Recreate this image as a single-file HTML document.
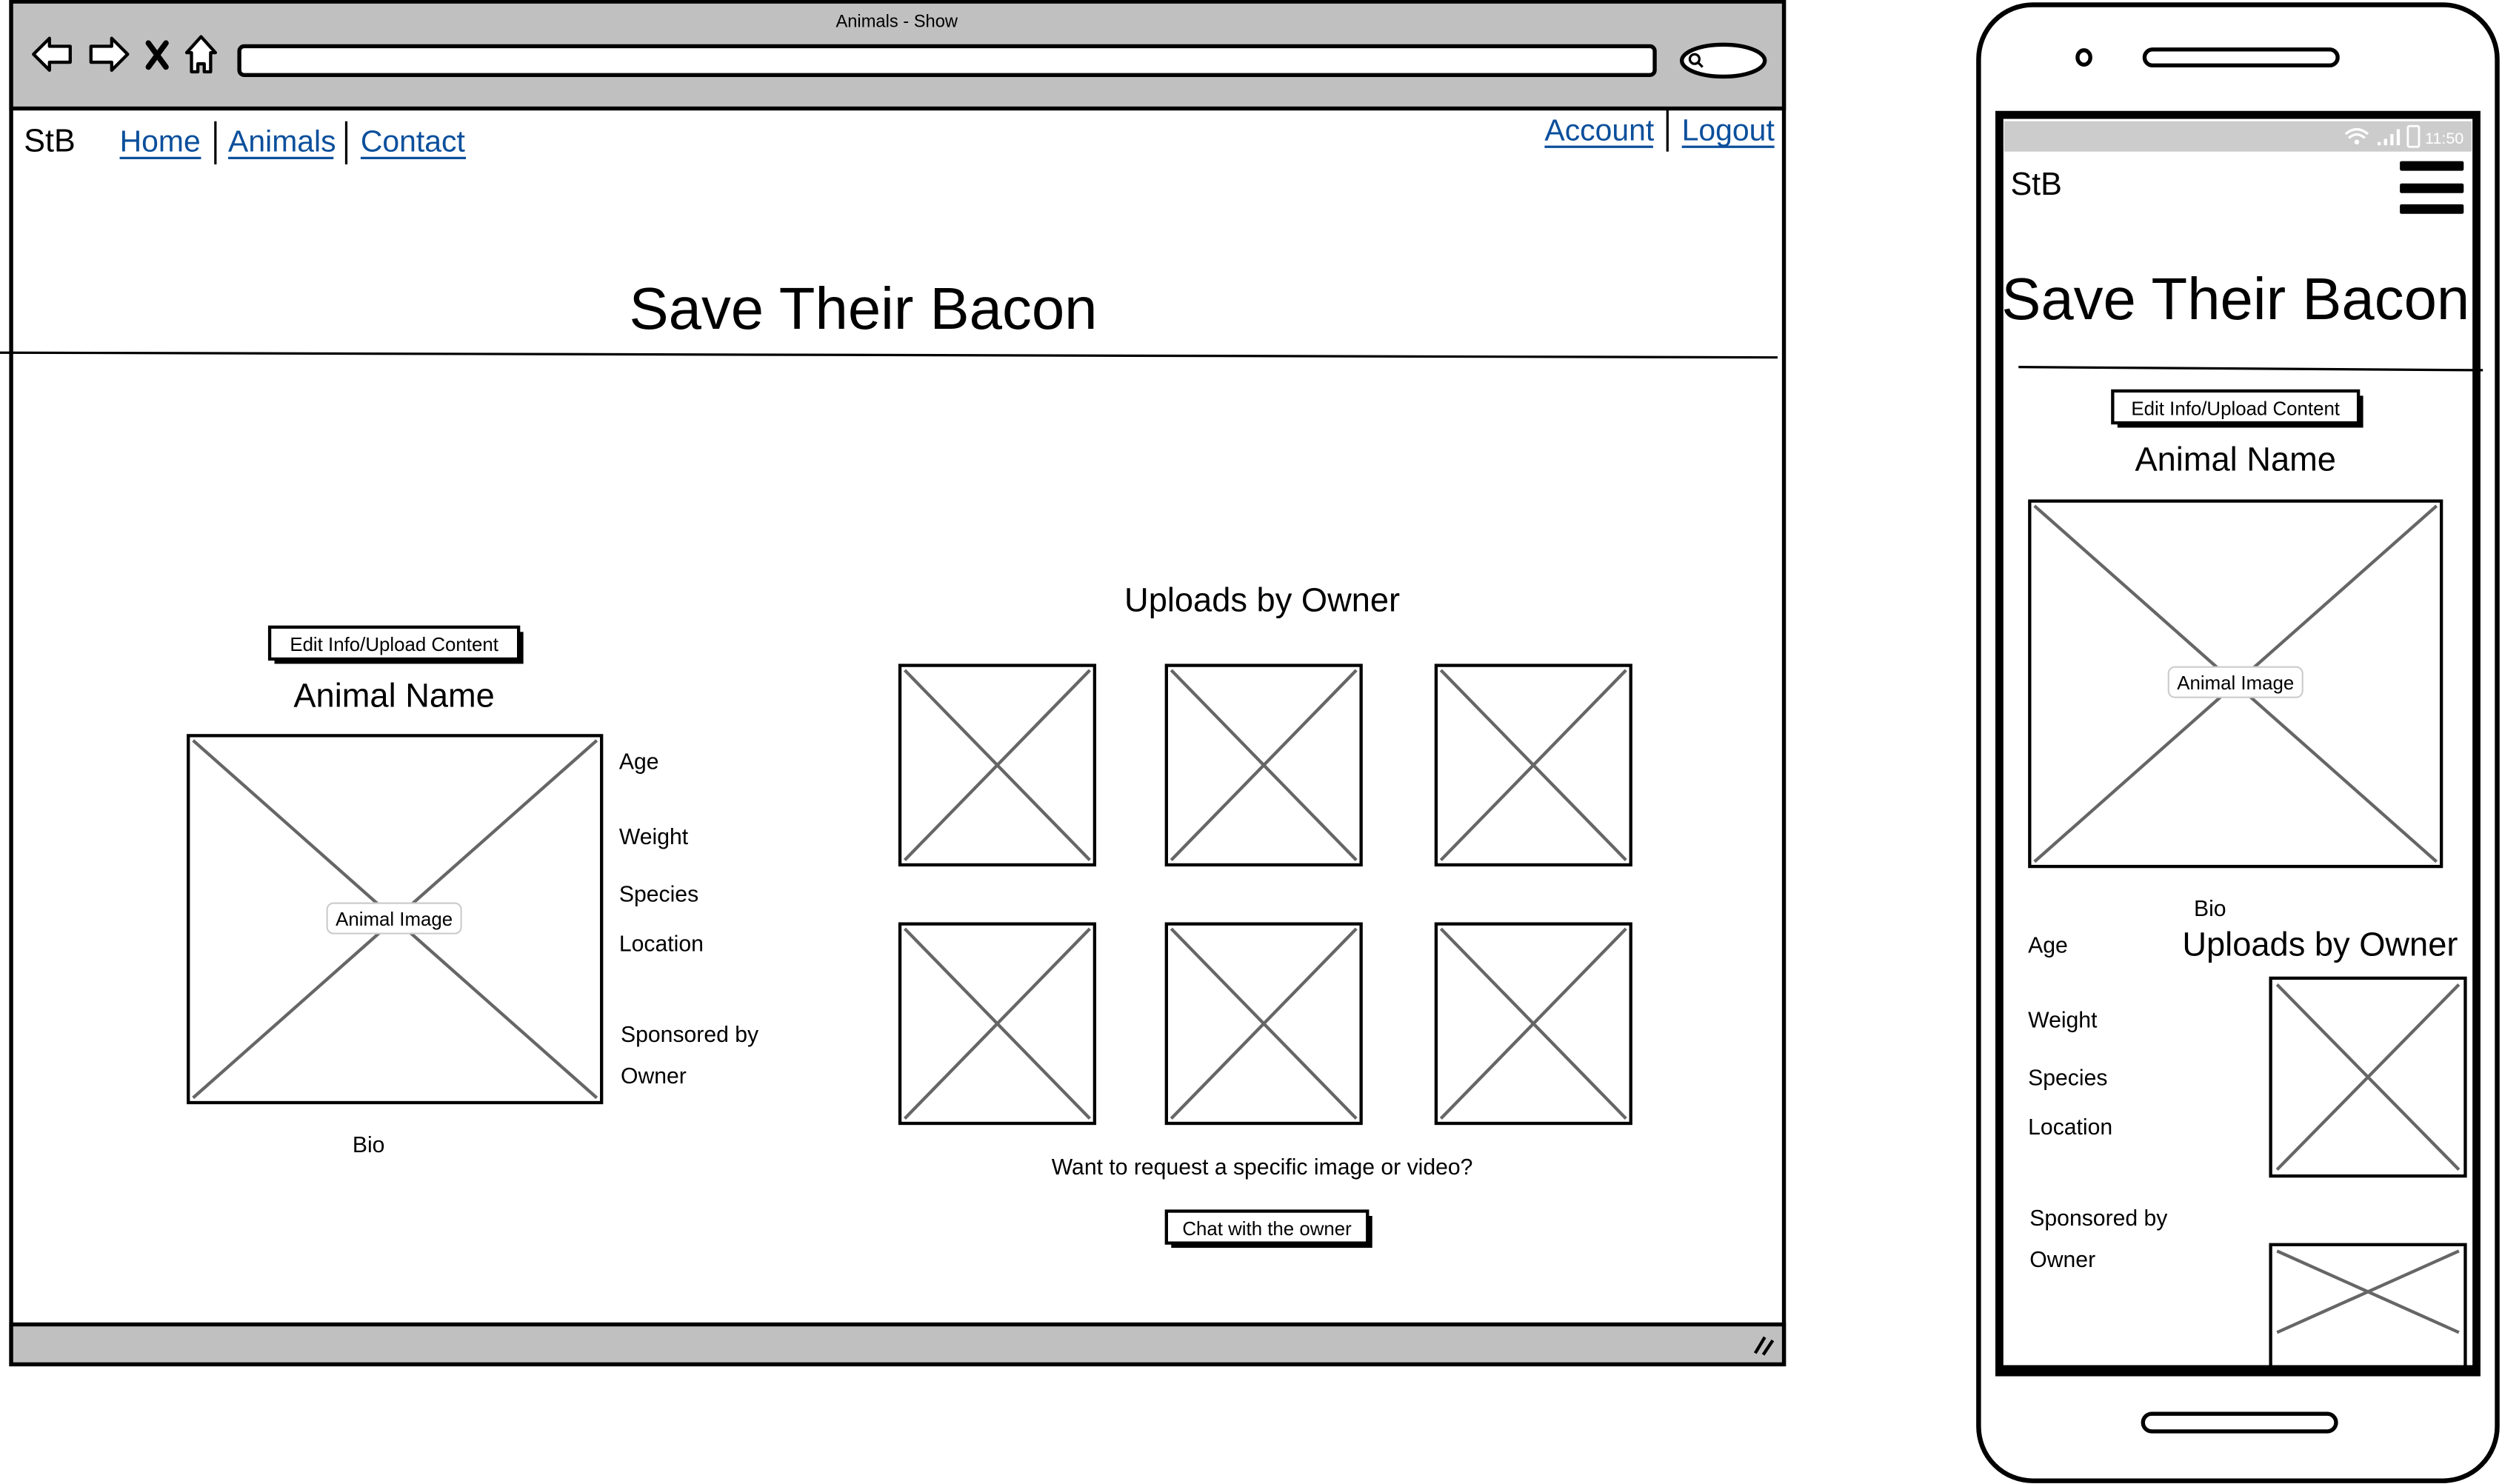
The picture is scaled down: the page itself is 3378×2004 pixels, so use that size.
<!DOCTYPE html>
<html><head><meta charset="utf-8"><style>
html,body{margin:0;padding:0;background:#fff;overflow:hidden}
svg{display:block}
text{font-family:"Liberation Sans",sans-serif;fill:#000}
</style></head><body>
<svg width="3378" height="2004" viewBox="0 0 1568 930" preserveAspectRatio="none" xmlns="http://www.w3.org/2000/svg">
<rect x="7" y="1" width="1111" height="854" fill="#fff" stroke="#000" stroke-width="2.5"/>
<rect x="7" y="1" width="1111" height="67" fill="#c0c0c0" stroke="#000" stroke-width="2.5"/>
<rect x="7" y="830" width="1111" height="25" fill="#c0c0c0" stroke="#000" stroke-width="2.5"/>
<text x="562" y="17" font-size="11" text-anchor="middle">Animals - Show</text>
<path d="M21 34 L31 24 L31 29 L44 29 L44 39 L31 39 L31 44 Z" fill="#fff" stroke="#000" stroke-width="2" stroke-linejoin="round"/>
<path d="M80 34 L70 24 L70 29 L57 29 L57 39 L70 39 L70 44 Z" fill="#fff" stroke="#000" stroke-width="2" stroke-linejoin="round"/>
<path d="M93 27 L104 42 M104 27 L93 42" stroke="#000" stroke-width="3.5" stroke-linecap="round"/>
<path d="M126 23 L117 33 L120 33 L120 45 L124 45 L124 40 L128 40 L128 45 L132 45 L132 33 L135 33 Z" fill="#fff" stroke="#000" stroke-width="2" stroke-linejoin="round"/>
<rect x="150" y="29" width="887" height="18" rx="3" fill="#fff" stroke="#000" stroke-width="2.5"/>
<ellipse cx="1080" cy="38" rx="26" ry="10" fill="#fff" stroke="#000" stroke-width="2.5"/>
<circle cx="1062" cy="37" r="3" fill="none" stroke="#000" stroke-width="1.5"/><line x1="1064" y1="39" x2="1067" y2="42" stroke="#000" stroke-width="1.5"/>
<path d="M1100 848 L1106 838 M1105 849 L1111 840" stroke="#000" stroke-width="2"/>
<text x="15" y="95" font-size="20">StB</text>
<g font-size="19">
<text x="75" y="95" style="fill:#0b4f9c">Home</text>
<text x="143" y="95" style="fill:#0b4f9c">Animals</text>
<text x="226" y="95" style="fill:#0b4f9c">Contact</text>
<text x="968" y="88" style="fill:#0b4f9c">Account</text>
<text x="1054" y="88" style="fill:#0b4f9c">Logout</text>
</g>
<g stroke="#0b4f9c" stroke-width="1.5">
<line x1="75" y1="99" x2="126" y2="99"/><line x1="143" y1="99" x2="209" y2="99"/><line x1="226" y1="99" x2="292" y2="99"/>
<line x1="968" y1="92" x2="1036" y2="92"/><line x1="1054" y1="92" x2="1112" y2="92"/>
</g>
<g stroke="#000" stroke-width="1.5"><line x1="135" y1="76" x2="135" y2="103"/><line x1="217" y1="76" x2="217" y2="103"/><line x1="1045" y1="69" x2="1045" y2="95"/></g>
<text x="541" y="206" font-size="37" text-anchor="middle">Save Their Bacon</text>
<path d="M0 221 L1114 224" stroke="#000" stroke-width="1.5"/>
<rect x="172" y="396" width="156" height="20" fill="#000"/>
<rect x="169" y="393" width="156" height="20" fill="#fff" stroke="#000" stroke-width="2"/>
<text x="247" y="408" font-size="12" text-anchor="middle">Edit Info/Upload Content</text>
<text x="247" y="443" font-size="21" text-anchor="middle">Animal Name</text>
<rect x="118" y="461" width="259" height="230" fill="#fff" stroke="#000" stroke-width="2"/>
<g stroke="#666" stroke-width="2"><line x1="121" y1="464" x2="374" y2="688"/><line x1="374" y1="464" x2="121" y2="688"/></g>
<rect x="205" y="566" width="84" height="19" rx="4" fill="#fff" stroke="#ccc"/>
<text x="247" y="580" font-size="12" text-anchor="middle">Animal Image</text>
<g font-size="14">
<text x="388" y="482">Age</text><text x="388" y="529">Weight</text><text x="388" y="565">Species</text>
<text x="388" y="596">Location</text><text x="389" y="653">Sponsored by</text><text x="389" y="679">Owner</text>
<text x="231" y="722" text-anchor="middle">Bio</text>
</g>
<text x="791" y="383" font-size="21" text-anchor="middle">Uploads by Owner</text>
<g fill="#fff" stroke="#000" stroke-width="2">
<rect x="564" y="417" width="122" height="125"/><rect x="731" y="417" width="122" height="125"/><rect x="900" y="417" width="122" height="125"/>
<rect x="564" y="579" width="122" height="125"/><rect x="731" y="579" width="122" height="125"/><rect x="900" y="579" width="122" height="125"/>
</g>
<g stroke="#666" stroke-width="2">
<path d="M567 420 L683 539 M683 420 L567 539"/><path d="M734 420 L850 539 M850 420 L734 539"/><path d="M903 420 L1019 539 M1019 420 L903 539"/>
<path d="M567 582 L683 701 M683 582 L567 701"/><path d="M734 582 L850 701 M850 582 L734 701"/><path d="M903 582 L1019 701 M1019 582 L903 701"/>
</g>
<text x="791" y="736" font-size="14" text-anchor="middle">Want to request a specific image or video?</text>
<rect x="734" y="762" width="126" height="20" fill="#000"/>
<rect x="731" y="759" width="126" height="20" fill="#fff" stroke="#000" stroke-width="2"/>
<text x="794" y="774" font-size="12" text-anchor="middle">Chat with the owner</text>
<rect x="1240" y="3" width="325" height="925" rx="34" fill="#fff" stroke="#000" stroke-width="3"/>
<ellipse cx="1306" cy="36" rx="4" ry="4.5" fill="none" stroke="#000" stroke-width="2.5"/>
<rect x="1344" y="31" width="121" height="10" rx="5" fill="none" stroke="#000" stroke-width="2.5"/>
<rect x="1343" y="886" width="121" height="11" rx="5.5" fill="none" stroke="#000" stroke-width="2.5"/>
<rect x="1253" y="72" width="299" height="788" fill="#fff" stroke="#000" stroke-width="5"/>
<rect x="1256" y="76" width="293" height="19" fill="#cccccc"/>
<text x="1544" y="90" font-size="10" text-anchor="end" style="fill:#fff">11:50</text>
<rect x="1509" y="79" width="7" height="13" rx="1" fill="none" stroke="#fff" stroke-width="1.3"/>
<path d="M1490 91 h2 v-2 h-2z M1494 91 h2 v-4 h-2z M1498 91 h2 v-7 h-2z M1502 91 h2 v-10 h-2z" fill="#fff"/>
<path d="M1470 84 Q1477 78 1484 84 M1472 86.5 Q1477 82 1482 86.5" stroke="#fff" stroke-width="1.5" fill="none"/><circle cx="1477" cy="89" r="1.5" fill="#fff"/>
<text x="1260" y="122" font-size="20">StB</text>
<g fill="#000"><rect x="1504" y="101" width="40" height="6" rx="1"/><rect x="1504" y="115" width="40" height="6" rx="1"/><rect x="1504" y="128" width="40" height="6" rx="1"/></g>
<text x="1401" y="200" font-size="37" text-anchor="middle">Save Their Bacon</text>
<path d="M1265 230 L1556 232" stroke="#000" stroke-width="1.5"/>
<rect x="1327" y="248" width="154" height="20" fill="#000"/>
<rect x="1324" y="245" width="154" height="20" fill="#fff" stroke="#000" stroke-width="2"/>
<text x="1401" y="260" font-size="12" text-anchor="middle">Edit Info/Upload Content</text>
<text x="1401" y="295" font-size="21" text-anchor="middle">Animal Name</text>
<rect x="1272" y="314" width="258" height="229" fill="#fff" stroke="#000" stroke-width="2"/>
<path d="M1275 317 L1527 540 M1527 317 L1275 540" stroke="#666" stroke-width="2"/>
<rect x="1359" y="418" width="84" height="19" rx="4" fill="#fff" stroke="#ccc"/>
<text x="1401" y="432" font-size="12" text-anchor="middle">Animal Image</text>
<g font-size="14">
<text x="1385" y="574" text-anchor="middle">Bio</text>
<text x="1271" y="597">Age</text><text x="1271" y="644">Weight</text><text x="1271" y="680">Species</text>
<text x="1271" y="711">Location</text><text x="1272" y="768">Sponsored by</text><text x="1272" y="794">Owner</text>
</g>
<text x="1454" y="599" font-size="21" text-anchor="middle">Uploads by Owner</text>
<rect x="1423" y="613" width="122" height="124" fill="#fff" stroke="#000" stroke-width="2"/>
<path d="M1427 617 L1541 733 M1541 617 L1427 733" stroke="#666" stroke-width="2"/>
<rect x="1423" y="780" width="122" height="78" fill="#fff" stroke="#000" stroke-width="2"/>
<path d="M1427 784 L1541 835 M1541 784 L1427 835" stroke="#666" stroke-width="2"/>
<line x1="1253" y1="858" x2="1552" y2="858" stroke="#000" stroke-width="5"/>
</svg>
</body></html>
